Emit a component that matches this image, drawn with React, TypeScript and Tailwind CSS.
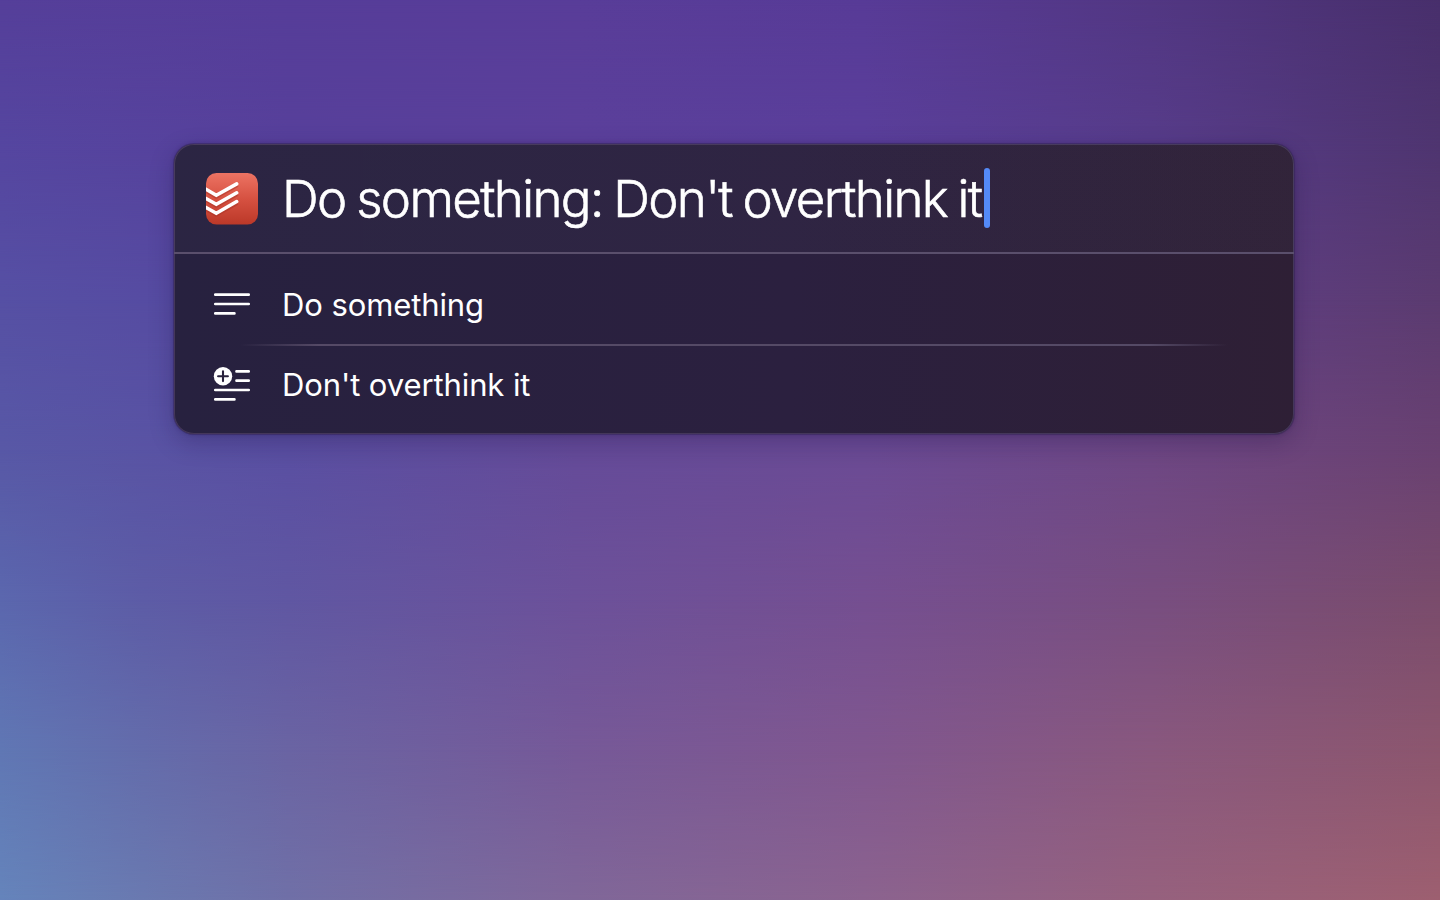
function Backdrop() {
  return (
    <div className="col-start-1 row-start-1 grid">
      <div className="col-start-1 row-start-1 bg-[linear-gradient(to_right,#553f9a,#563d99,#593d99,#583b97,#523783,#482f6c)]" />
      <div className="col-start-1 row-start-1 bg-[linear-gradient(to_right,#5546a0,#57409b,#5b409b,#5a3f9b,#573c8a,#4f3570)] [mask-image:linear-gradient(to_bottom,transparent_0px,black_150px)]" />
      <div className="col-start-1 row-start-1 bg-[linear-gradient(to_right,#5650a4,#5648a0,#5e459b,#614499,#603f88,#5b3b70)] [mask-image:linear-gradient(to_bottom,transparent_150px,black_300px)]" />
      <div className="col-start-1 row-start-1 bg-[linear-gradient(to_right,#5858a6,#5a4fa2,#654b99,#6b4b95,#6e4784,#694171)] [mask-image:linear-gradient(to_bottom,transparent_300px,black_450px)]" />
      <div className="col-start-1 row-start-1 bg-[linear-gradient(to_right,#5b67ae,#5d5ca6_10%,#6057a2_20%,#6c519a_40%,#754f91_60%,#784e80_80%,#7a4c6c)] [mask-image:linear-gradient(to_bottom,transparent_450px,black_600px)]" />
      <div className="col-start-1 row-start-1 bg-[linear-gradient(to_right,#6077b4,#646cab_10%,#6a64a3_20%,#765998_40%,#80578f_60%,#89587e_80%,#8c566e)] [mask-image:linear-gradient(to_bottom,transparent_600px,black_750px)]" />
      <div className="col-start-1 row-start-1 bg-[linear-gradient(to_right,#6584bb,#6a79b0_10%,#7070a7_20%,#806799_40%,#8b638f_60%,#96617e_80%,#9d5f70)] [mask-image:linear-gradient(to_bottom,transparent_750px,black_900px)]" />
    </div>
  );
}

function AppLogo() {
  return (
    <svg className="mt-[2px] size-[52px] shrink-0" viewBox="0 0 52 52" fill="none">
      <defs>
        <linearGradient id="logo-fill" x1="0" y1="0" x2="0" y2="1">
          <stop offset="0" stopColor="#ec7363" />
          <stop offset="0.5" stopColor="#d65141" />
          <stop offset="1" stopColor="#bb3828" />
        </linearGradient>
        <clipPath id="logo-clip">
          <rect width="52" height="51.5" rx="10.5" />
        </clipPath>
      </defs>
      <g clipPath="url(#logo-clip)">
        <rect width="52" height="52" fill="url(#logo-fill)" />
        <g stroke="#a93325" strokeOpacity="0.5" strokeWidth="3.6" strokeLinejoin="round">
          <path d="M-2 17 10.3 24 31.5 12.2M-2 26 10.3 33 31.5 21.2M-2 35 10.3 42 31.5 30.2" />
        </g>
        <g stroke="#ffffff" strokeWidth="3.5" strokeLinecap="round">
          <path d="M-2 15.2 10.3 22.2 30.7 10.9M-2 24.4 10.3 31.3 30.7 19.8M-2 33.4 10.3 40.2 30.7 28.6" />
        </g>
      </g>
    </svg>
  );
}

function TextIcon() {
  return (
    <svg className="h-[40px] w-[40px] shrink-0" viewBox="0 0 40 40" fill="none" stroke="#fff" strokeWidth="2.7" strokeLinecap="round">
      <path d="M3.3 10.7H36.7M3.3 20H36.7M3.3 29.4H22.4" />
    </svg>
  );
}

function TextAddIcon() {
  return (
    <svg className="h-[40px] w-[40px] shrink-0" viewBox="0 0 40 40" fill="none" stroke="#fff" strokeWidth="2.7" strokeLinecap="round">
      <path d="M24.5 7.4H36.7M24.5 16.7H36.7M3.3 26H36.7M3.3 35.4H22.4" />
      <circle cx="11" cy="12.2" r="9.2" fill="#fff" stroke="none" />
      <path d="M6.1 12.2H15.9M11 7.3V17.1" stroke="#28213c" strokeWidth="2.1" />
    </svg>
  );
}

export default function App() {
  return (
    <main className="grid h-[900px] w-[1440px] overflow-hidden font-['Inter','Liberation_Sans',sans-serif] text-white">
      <Backdrop />
      <div className="z-10 col-start-1 row-start-1 pt-[144px] pl-[174px]">
        <section className="h-[290px] w-[1120px] overflow-hidden rounded-[20px] bg-[linear-gradient(to_right,#27213f,#2b203f_55%,#2e1f35)] shadow-[inset_0_0_0_1px_#44375a,0_0_0_1px_rgba(50,35,85,0.45),0_8px_24px_rgba(25,15,60,0.28),0_0_4px_rgba(25,15,60,0.3)]">
          <header className="flex h-[110px] items-center border-b-2 border-[#5a4f6c] bg-[linear-gradient(to_right,rgba(255,255,255,0.02),rgba(200,235,255,0.025))] pl-[32px]">
            <AppLogo />
            <h1 className="ml-[24px] w-[702px] pt-[1px] text-[51px] leading-[60px] font-light tracking-[-1.64px] whitespace-pre [word-spacing:-2.2px] [-webkit-text-stroke:0.6px_white]">Do something: Don't overthink it</h1>
            <span className="mb-[1px] h-[60px] w-[6px] rounded-full bg-[#548af7]" />
          </header>
          <ul className="pt-[10px] text-[31px] leading-[40px] tracking-[-0.1px]">
            <li className="flex h-[80px] items-center pl-[38px]">
              <TextIcon />
              <span className="ml-[30px] pt-[1px] whitespace-pre">Do something</span>
            </li>
            <li className="flex h-[80px] flex-col">
              <div className="mx-[66px] h-[2px] shrink-0 bg-[linear-gradient(to_right,transparent,#554a66_8%,#554a66_92%,transparent)]" />
              <div className="flex h-[76px] items-center pl-[38px]">
                <TextAddIcon />
                <span className="ml-[30px] pt-[1px] whitespace-pre">Don't overthink it</span>
              </div>
            </li>
          </ul>
        </section>
      </div>
    </main>
  );
}
